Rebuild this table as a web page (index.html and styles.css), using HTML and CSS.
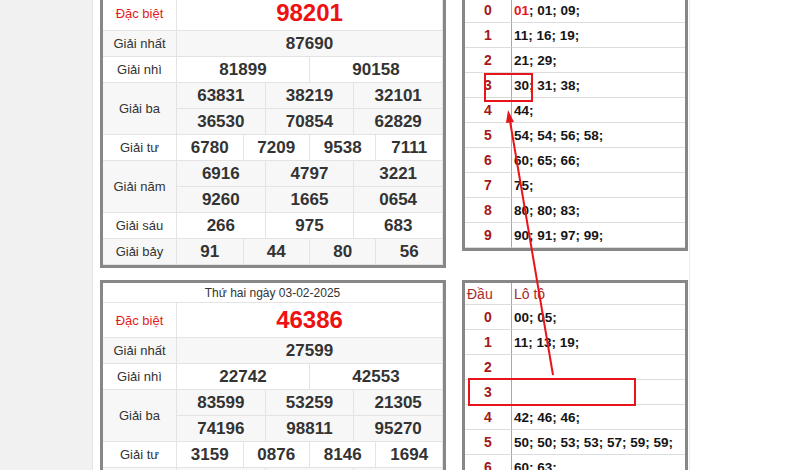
FILE: index.html
```html
<!DOCTYPE html>
<html lang="vi">
<head>
<meta charset="utf-8">
<title>Kết quả xổ số</title>
<link rel="stylesheet" href="styles.css">
</head>
<body>
<div class="page">
  <aside class="side"></aside>
  <main class="main">
    <div class="board">
      <div class="kq">
        <div class="hd">Thứ ba ngày 04-02-2025</div>
        <div class="lb red">Đặc biệt</div><div class="n db s12">98201</div>
        <div class="lb alt">Giải nhất</div><div class="n s12 alt">87690</div>
        <div class="lb">Giải nhì</div><div class="n s6">81899</div><div class="n s6">90158</div>
        <div class="lb r2 alt">Giải ba</div><div class="n s4 alt">63831</div><div class="n s4 alt">38219</div><div class="n s4 alt">32101</div>
        <div class="n s4 alt">36530</div><div class="n s4 alt">70854</div><div class="n s4 alt">62829</div>
        <div class="lb">Giải tư</div><div class="n s3">6780</div><div class="n s3">7209</div><div class="n s3">9538</div><div class="n s3">7111</div>
        <div class="lb r2 alt">Giải năm</div><div class="n s4 alt">6916</div><div class="n s4 alt">4797</div><div class="n s4 alt">3221</div>
        <div class="n s4 alt">9260</div><div class="n s4 alt">1665</div><div class="n s4 alt">0654</div>
        <div class="lb">Giải sáu</div><div class="n s4">266</div><div class="n s4">975</div><div class="n s4">683</div>
        <div class="lb alt">Giải bảy</div><div class="n s3 alt">91</div><div class="n s3 alt">44</div><div class="n s3 alt">80</div><div class="n s3 alt">56</div>
      </div>
      <div class="lt">
        <div class="h hd1">Đầu</div><div class="h">Lô tô</div>
        <div class="d">0</div><div class="v"><span class="red">01</span>; 01; 09;</div>
        <div class="d">1</div><div class="v">11; 16; 19;</div>
        <div class="d">2</div><div class="v">21; 29;</div>
        <div class="d">3</div><div class="v">30; 31; 38;</div>
        <div class="d">4</div><div class="v">44;</div>
        <div class="d">5</div><div class="v">54; 54; 56; 58;</div>
        <div class="d">6</div><div class="v">60; 65; 66;</div>
        <div class="d">7</div><div class="v">75;</div>
        <div class="d">8</div><div class="v">80; 80; 83;</div>
        <div class="d">9</div><div class="v">90; 91; 97; 99;</div>
      </div>

      <div class="kq">
        <div class="hd">Thứ hai ngày 03-02-2025</div>
        <div class="lb red">Đặc biệt</div><div class="n db s12">46386</div>
        <div class="lb alt">Giải nhất</div><div class="n s12 alt">27599</div>
        <div class="lb">Giải nhì</div><div class="n s6">22742</div><div class="n s6">42553</div>
        <div class="lb r2 alt">Giải ba</div><div class="n s4 alt">83599</div><div class="n s4 alt">53259</div><div class="n s4 alt">21305</div>
        <div class="n s4 alt">74196</div><div class="n s4 alt">98811</div><div class="n s4 alt">95270</div>
        <div class="lb">Giải tư</div><div class="n s3">3159</div><div class="n s3">0876</div><div class="n s3">8146</div><div class="n s3">1694</div>
        <div class="lb r2 alt">Giải năm</div><div class="n s4 alt">3450</div><div class="n s4 alt">1853</div><div class="n s4 alt">7257</div>
        <div class="n s4 alt">0919</div><div class="n s4 alt">2160</div><div class="n s4 alt">5463</div>
        <div class="lb">Giải sáu</div><div class="n s4">146</div><div class="n s4">250</div><div class="n s4">713</div>
        <div class="lb alt">Giải bảy</div><div class="n s3 alt">00</div><div class="n s3 alt">72</div><div class="n s3 alt">81</div><div class="n s3 alt">98</div>
      </div>
      <div class="lt">
        <div class="h hd1">Đầu</div><div class="h">Lô tô</div>
        <div class="d">0</div><div class="v">00; 05;</div>
        <div class="d">1</div><div class="v">11; 13; 19;</div>
        <div class="d">2</div><div class="v"></div>
        <div class="d">3</div><div class="v"></div>
        <div class="d">4</div><div class="v">42; 46; 46;</div>
        <div class="d">5</div><div class="v">50; 50; 53; 53; 57; 59; 59;</div>
        <div class="d">6</div><div class="v">60; 63;</div>
        <div class="d">7</div><div class="v">70; 72; 76;</div>
        <div class="d">8</div><div class="v">81; <span class="red">86</span>;</div>
        <div class="d">9</div><div class="v">94; 96; 98; 99; 99;</div>
      </div>
    </div>
  </main>
  <svg class="annot" width="800" height="470" viewBox="0 0 800 470" aria-hidden="true">
    <rect x="485" y="74" width="47" height="27" fill="none" stroke="#e8141b" stroke-width="2"/>
    <rect x="469" y="379" width="166" height="26" fill="none" stroke="#e8141b" stroke-width="2"/>
    <line x1="553" y1="375" x2="510" y2="121" stroke="#e8141b" stroke-width="2"/>
    <polygon points="508,110 514,122 506,123" fill="#e8141b"/>
  </svg>
</div>
</body>
</html>
```
FILE: styles.css
```css
* { box-sizing: border-box; margin: 0; padding: 0; }
html, body { height: 100%; overflow: hidden; background: #fff; }
body { font-family: "Liberation Sans", Arial, sans-serif; color: #333; }

.page { position: relative; display: flex; min-height: 100%; }
.side { flex: none; width: 93px; background: #f1f1f1; border-right: 1px solid #e6e6e6; }
.main { flex: none; width: 597px; padding: 0 1px 0 7px; border-right: 1px solid #ececec; }

.board {
  display: grid;
  grid-template-columns: 346px 226px;
  column-gap: 16px;
  row-gap: 12px;
  align-items: start;
  margin-top: -27px;
}

/* results table */
.kq {
  display: grid;
  grid-template-columns: 74px repeat(12, 1fr);
  grid-template-rows: 20px 35px repeat(9, 26px);
  border: 3px solid #878787;
  background: #fff;
}
.kq > div {
  display: flex;
  align-items: center;
  justify-content: center;
  border-right: 1px solid #e3e3e3;
  border-bottom: 1px solid #e3e3e3;
  min-width: 0;
}
.kq .hd { grid-column: span 13; font-size: 12px; color: #333; }
.kq .lb { font-size: 13px; color: #333; }
.kq .r2 { grid-row: span 2; }
.kq .n { font-size: 17px; font-weight: bold; color: #333; }
.kq .db { font-size: 24px; color: #ee1111; }
.kq .lb.red { color: #e21b1b; }
.s12 { grid-column: span 12; }
.s6 { grid-column: span 6; }
.s4 { grid-column: span 4; }
.s3 { grid-column: span 3; }
.kq .alt { background: #f7f7f7; }

/* loto table */
.lt {
  display: grid;
  grid-template-columns: 47px 1fr;
  grid-template-rows: 22px repeat(10, 25px);
  border: 3px solid #878787;
  background: #fff;
}
.lt > div {
  display: flex;
  align-items: center;
  border-bottom: 1px solid #dcdcdc;
  white-space: nowrap;
}
.lt .h { font-size: 14px; color: #a82a2a; padding-left: 2px; }
.lt .hd1 { border-right: 1px solid #a8a8a8; }
.lt .d {
  justify-content: center;
  border-right: 1px solid #a8a8a8;
  font-size: 14px;
  font-weight: bold;
  color: #a31919;
}
.lt .v { padding-left: 2px; font-size: 13.5px; font-weight: bold; color: #151515; }
.lt .red { color: #e8141b; }

.annot { position: absolute; left: 0; top: 0; pointer-events: none; }
```
